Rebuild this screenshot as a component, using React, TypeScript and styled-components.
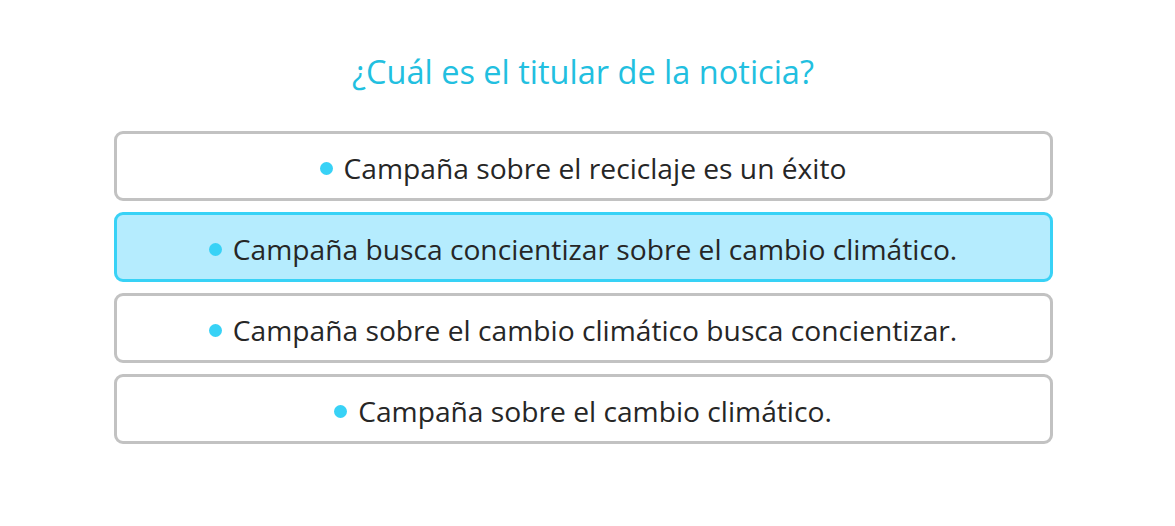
import React from "react";
import styled, { createGlobalStyle } from "styled-components";

const Global = createGlobalStyle`
  html, body { margin: 0; padding: 0; background: #ffffff; }
  body { font-family: "Open Sans", "Noto Sans", "Liberation Sans", sans-serif; }
`;

const Page = styled.main`
  width: 1175px;
  height: 526px;
  box-sizing: border-box;
  padding: 48px 9px 0 0;
  display: flex;
  flex-direction: column;
  align-items: center;
`;

const Title = styled.h1`
  margin: 0 0 35px 0;
  font-weight: 400;
  font-size: 32.5px;
  line-height: 48px;
  color: #22bfe0;
`;

const List = styled.ul`
  list-style: none;
  margin: 0;
  padding: 0;
  width: 939px;
  display: flex;
  flex-direction: column;
  gap: 11px;
`;

const Option = styled.li<{ $selected?: boolean }>`
  box-sizing: border-box;
  height: 70px;
  padding-top: 3px;
  border: 3px solid ${(p) => (p.$selected ? "#38d2f6" : "#c2c2c2")};
  background: ${(p) => (p.$selected ? "#b5ecfe" : "#ffffff")};
  border-radius: 9px;
  display: flex;
  align-items: center;
  justify-content: center;
  gap: 11px;
  font-size: 28.2px;
  color: #262626;
  cursor: pointer;
`;

const Dot = styled.span`
  width: 13px;
  height: 13px;
  border-radius: 50%;
  background: #38d2f6;
  flex: none;
  margin-top: 2px;
`;

const options = [
  "Campaña sobre el reciclaje es un éxito",
  "Campaña busca concientizar sobre el cambio climático.",
  "Campaña sobre el cambio climático busca concientizar.",
  "Campaña sobre el cambio climático.",
];

export default function App() {
  return (
    <>
      <Global />
      <Page>
        <Title>¿Cuál es el titular de la noticia?</Title>
        <List>
          {options.map((o, i) => (
            <Option key={o} $selected={i === 1}>
              <Dot />
              <span>{o}</span>
            </Option>
          ))}
        </List>
      </Page>
    </>
  );
}
